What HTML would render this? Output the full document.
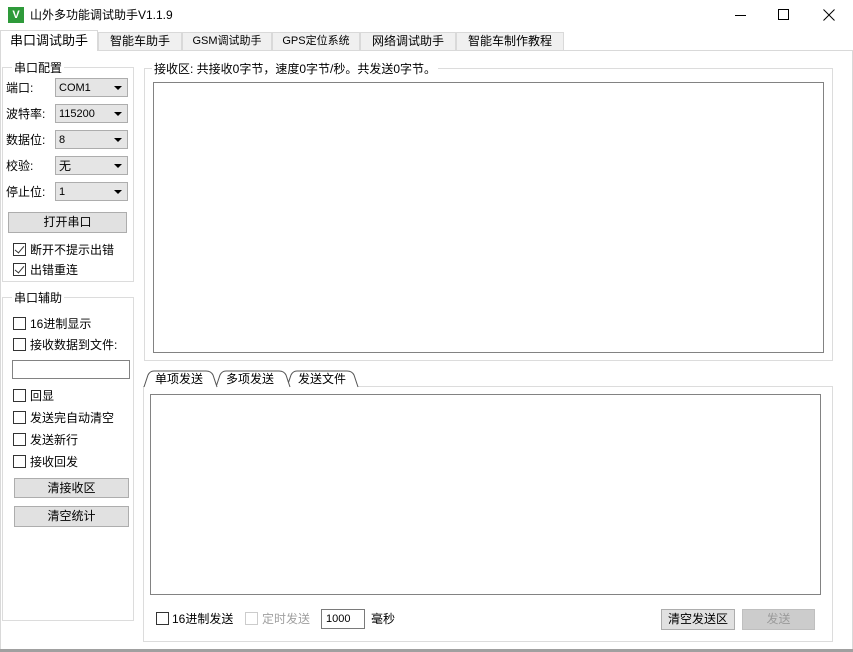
<!DOCTYPE html><html><head><meta charset="utf-8"><style>
*{box-sizing:border-box;margin:0;padding:0}
body{width:853px;height:652px;background:#fff;font-family:"Liberation Sans","Noto Sans CJK SC",sans-serif;font-size:12px;color:#000;position:relative;overflow:hidden}
.a{position:absolute}
.t{position:absolute;white-space:nowrap;line-height:14px}
.grp{position:absolute;border:1px solid #dcdcdc}
.lg{position:absolute;background:#fff;padding:0 2px;line-height:14px;font-size:12px}
.combo{position:absolute;left:55px;width:73px;height:19px;border:1px solid #adadad;background:#e5e5e5;font-size:11px;line-height:18px;padding-left:3px}
.combo:after{content:"";position:absolute;right:5px;top:7px;border-left:4px solid transparent;border-right:4px solid transparent;border-top:4px solid #000}
.btn{position:absolute;border:1px solid #adadad;background:#e1e1e1;text-align:center;line-height:18px}
.ck{position:absolute;width:13px;height:13px;border:1px solid #333;background:#fff}
.ck.on:after{content:"";position:absolute;left:3px;top:0px;width:4px;height:8px;border-right:1.5px solid #333;border-bottom:1.5px solid #333;transform:rotate(40deg)}
.tab{position:absolute;top:32px;height:18px;border:1px solid #d9d9d9;border-bottom:none;background:#f0f0f0;text-align:center;line-height:17px;font-size:12px}
.box{position:absolute;border:1px solid #828282;background:#fff}
</style></head><body>
<div class="a" style="left:8px;top:7px;width:16px;height:16px;background:#2e9a3a;color:#fff;font-size:11px;font-weight:bold;text-align:center;line-height:16px">V</div>
<div class="t" style="left:30px;top:8px;font-size:12px">山外多功能调试助手V1.1.9</div>
<div class="a" style="left:735px;top:15px;width:11px;height:1px;background:#000"></div>
<div class="a" style="left:778px;top:9px;width:11px;height:11px;border:1px solid #000"></div>
<svg class="a" style="left:823px;top:9px" width="12" height="12"><path d="M0.5 0.5L11.5 11.5M11.5 0.5L0.5 11.5" stroke="#000" stroke-width="1"/></svg>
<div class="a" style="left:0;top:50px;width:853px;height:1px;background:#d9d9d9"></div>
<div class="tab" style="left:0;top:30px;height:21px;width:98px;background:#fff;font-size:13px;line-height:20px">串口调试助手</div>
<div class="tab" style="left:98px;width:84px">智能车助手</div>
<div class="tab" style="left:182px;width:90px;font-size:11px">GSM调试助手</div>
<div class="tab" style="left:272px;width:88px;font-size:11px">GPS定位系统</div>
<div class="tab" style="left:360px;width:96px">网络调试助手</div>
<div class="tab" style="left:456px;width:108px">智能车制作教程</div>
<div class="a" style="left:0;top:51px;width:1px;height:600px;background:#d9d9d9"></div>
<div class="a" style="left:852px;top:51px;width:1px;height:600px;background:#d9d9d9"></div>
<div class="a" style="left:0;top:649px;width:853px;height:3px;background:#a0a0a0"></div>

<div class="grp" style="left:2px;top:67px;width:132px;height:215px"></div>
<div class="lg" style="left:12px;top:61px">串口配置</div>
<div class="t" style="left:6px;top:81px">端口:</div><div class="combo" style="top:78px">COM1</div>
<div class="t" style="left:6px;top:107px">波特率:</div><div class="combo" style="top:104px">115200</div>
<div class="t" style="left:6px;top:133px">数据位:</div><div class="combo" style="top:130px">8</div>
<div class="t" style="left:6px;top:159px">校验:</div><div class="combo" style="top:156px;font-size:12px">无</div>
<div class="t" style="left:6px;top:185px">停止位:</div><div class="combo" style="top:182px">1</div>
<div class="btn" style="left:8px;top:212px;width:119px;height:21px">打开串口</div>
<div class="ck on" style="left:13px;top:243px"></div><div class="t" style="left:30px;top:243px">断开不提示出错</div>
<div class="ck on" style="left:13px;top:263px"></div><div class="t" style="left:30px;top:263px">出错重连</div>

<div class="grp" style="left:2px;top:297px;width:132px;height:324px"></div>
<div class="lg" style="left:12px;top:291px">串口辅助</div>
<div class="ck" style="left:13px;top:317px"></div><div class="t" style="left:30px;top:317px">16进制显示</div>
<div class="ck" style="left:13px;top:338px"></div><div class="t" style="left:30px;top:338px">接收数据到文件:</div>
<div class="box" style="left:12px;top:360px;width:118px;height:19px"></div>
<div class="ck" style="left:13px;top:389px"></div><div class="t" style="left:30px;top:389px">回显</div>
<div class="ck" style="left:13px;top:411px"></div><div class="t" style="left:30px;top:411px">发送完自动清空</div>
<div class="ck" style="left:13px;top:433px"></div><div class="t" style="left:30px;top:433px">发送新行</div>
<div class="ck" style="left:13px;top:455px"></div><div class="t" style="left:30px;top:455px">接收回发</div>
<div class="btn" style="left:14px;top:478px;width:115px;height:20px">清接收区</div>
<div class="btn" style="left:14px;top:506px;width:115px;height:21px">清空统计</div>

<div class="grp" style="left:144px;top:68px;width:689px;height:293px"></div>
<div class="lg" style="left:152px;top:62px">接收区: 共接收0字节，速度0字节/秒。共发送0字节。</div>
<div class="box" style="left:153px;top:82px;width:671px;height:271px"></div>

<div class="a" style="left:143px;top:386px;width:690px;height:256px;border:1px solid #dcdcdc"></div>
<svg class="a" style="left:143px;top:370px" width="220" height="18"><g fill="#fff" stroke="#555" stroke-width="1"><path d="M144 17 L148 5 Q150 1 154 1 L204 1 Q209 1 211 5 L215 17"/><path d="M73 17 L77 5 Q79 1 83 1 L136 1 Q141 1 143 5 L147 17"/><path d="M1 17 L5 5 Q7 1 11 1 L63 1 Q68 1 70 5 L74 17"/></g></svg>
<div class="t" style="left:155px;top:372px">单项发送</div>
<div class="t" style="left:226px;top:372px">多项发送</div>
<div class="t" style="left:298px;top:372px">发送文件</div>
<div class="box" style="left:150px;top:394px;width:671px;height:201px"></div>
<div class="ck" style="left:156px;top:612px"></div><div class="t" style="left:172px;top:612px">16进制发送</div>
<div class="ck" style="left:245px;top:612px;border-color:#ccc"></div><div class="t" style="left:262px;top:612px;color:#a0a0a0">定时发送</div>
<div class="box" style="left:321px;top:609px;width:44px;height:20px;font-size:11px;line-height:18px;padding-left:4px;border-color:#7a7a7a">1000</div>
<div class="t" style="left:371px;top:612px">毫秒</div>
<div class="btn" style="left:661px;top:609px;width:74px;height:21px">清空发送区</div>
<div class="btn" style="left:742px;top:609px;width:73px;height:21px;background:#ccc;border-color:#bfbfbf;color:#9a9a9a">发送</div>
</body></html>
